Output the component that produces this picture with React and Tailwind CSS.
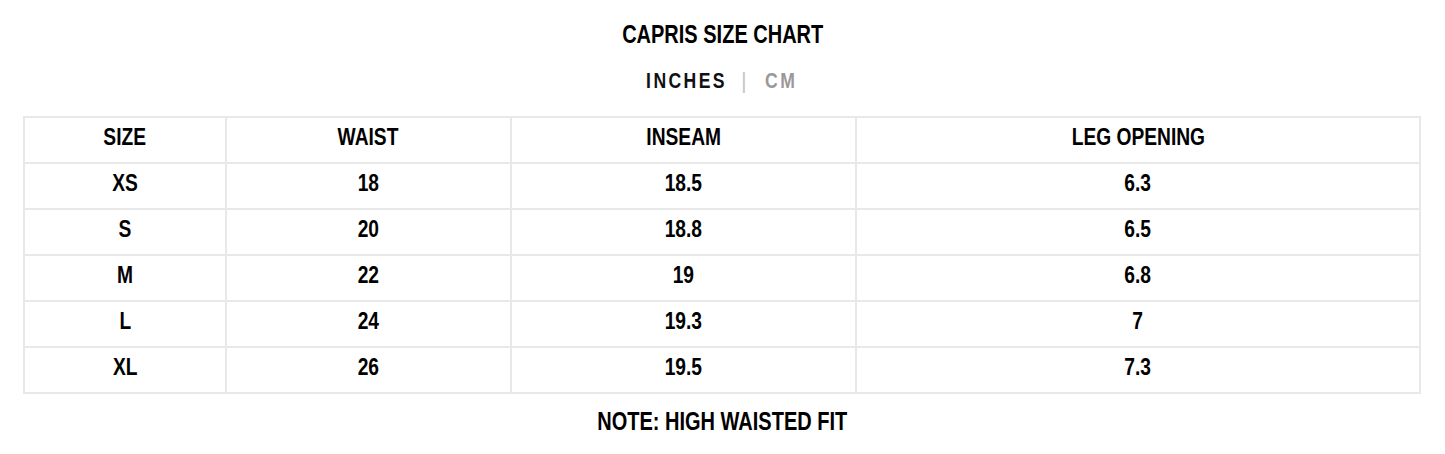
function N({ children, className = "" }) {
  return <span className={"inline-block scale-x-[0.8] whitespace-nowrap " + className}>{children}</span>;
}

export default function App() {
  const rows = [
    ["XS", "18", "18.5", "6.3"],
    ["S", "20", "18.8", "6.5"],
    ["M", "22", "19", "6.8"],
    ["L", "24", "19.3", "7"],
    ["XL", "26", "19.5", "7.3"],
  ];
  const font = { fontFamily: '"Liberation Sans", Arial, sans-serif' };
  const cell = "border-2 border-[#e8e8e8] p-0 pb-[6px] align-middle leading-[28px]";
  return (
    <div className="w-[1445px] h-[454px] bg-white text-black font-bold" style={font}>
      <div className="flex flex-col items-center pt-[19px]">
        <h2 className="text-[25px] leading-[30px] font-bold"><N>CAPRIS SIZE CHART</N></h2>
        <div className="mt-[19px] pr-[8px] flex items-center text-[22px] leading-[26px]">
          <N className="tracking-[3px] text-[#111]">INCHES</N>
          <span className="ml-[4px] mr-[14px] text-[#c8c8c8] font-normal text-[22px]">|</span>
          <N className="tracking-[3px] text-[#999]">CM</N>
        </div>
      </div>
      <div className="px-[23px] mt-[22px]">
        <table className="w-[1398px] border-collapse text-[24px] text-center">
          <thead>
            <tr className="h-[46px]">
              <th className={"w-[202px] font-bold " + cell}><N>SIZE</N></th>
              <th className={"w-[286px] font-bold " + cell}><N>WAIST</N></th>
              <th className={"w-[345px] font-bold " + cell}><N>INSEAM</N></th>
              <th className={"w-[565px] font-bold " + cell}><N>LEG OPENING</N></th>
            </tr>
          </thead>
          <tbody>
            {rows.map((r) => (
              <tr key={r[0]} className="h-[46px]">
                {r.map((c, i) => (
                  <td key={i} className={cell}><N>{c}</N></td>
                ))}
              </tr>
            ))}
          </tbody>
        </table>
      </div>
      <div className="mt-[12px] text-center text-[25px] leading-[30px]"><N>NOTE: HIGH WAISTED FIT</N></div>
    </div>
  );
}
